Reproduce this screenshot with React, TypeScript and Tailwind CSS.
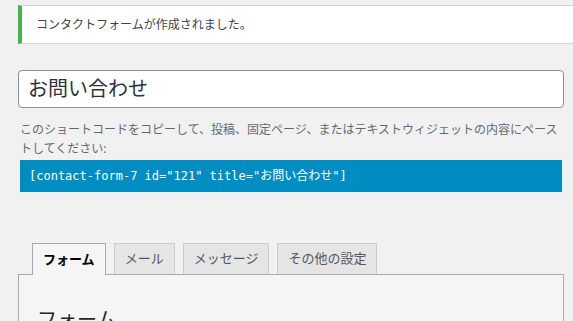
const tabs = ['フォーム', 'メール', 'メッセージ', 'その他の設定'];

const App = () => {
  const active = 0;
  return (
    <div
      className="h-screen bg-[#f1f1f1] pt-[5px] overflow-hidden"
      style={{ fontFamily: '"Noto Sans", "Noto Sans CJK JP", sans-serif' }}
    >
      <div className="ml-[18px] h-[39px] flex items-center bg-white border-y border-y-[#d3d3d3] border-l-4 border-l-[#46b450] pl-[14px] text-[12px] text-[#3c434a]">
        コンタクトフォームが作成されました。
      </div>

      <div className="ml-[18px] mr-[9px] mt-[26px]">
        <div className="h-[38px] flex items-center rounded-[4px] border border-[#8c8f94] bg-white px-[9px] text-[20px] text-[#2c3338]">
          お問い合わせ
        </div>

        <p className="mt-[12px] px-[2px] text-[12px] leading-[19px] text-[#646970]">
          このショートコードをコピーして、投稿、固定ページ、またはテキストウィジェットの内容にペーストしてください:
        </p>

        <div
          className="mx-[2px] mt-[2px] h-[32px] flex items-center bg-[#008ec2] px-[9px] text-[12px] text-white"
          style={{ fontFamily: '"DejaVu Sans Mono", "Noto Sans CJK JP", monospace' }}
        >
          [contact-form-7 id="121" title="お問い合わせ"]
        </div>

        <div className="mt-[51px] flex gap-[8px] pl-[14px]">
          {tabs.map((t, i) =>
            i === active ? (
              <div
                key={t}
                className="relative z-10 -mb-px h-[32px] flex items-center border border-b-0 border-[#aaaaaa] bg-[#f5f5f5] px-[10px] text-[13px] font-bold text-black"
              >
                {t}
              </div>
            ) : (
              <div
                key={t}
                className="h-[31px] flex items-center border border-b-0 border-[#cccccc] bg-[#e5e5e5] px-[10px] text-[13px] text-[#50575e]"
              >
                {t}
              </div>
            ),
          )}
        </div>

        <div className="border border-[#aaaaaa] bg-[#f5f5f5] px-[18px] pt-[32px] pb-[40px]">
          <h2 className="text-[20px] leading-[26px] text-[#23282d]">フォーム</h2>
        </div>
      </div>
    </div>
  );
};

export default App;
